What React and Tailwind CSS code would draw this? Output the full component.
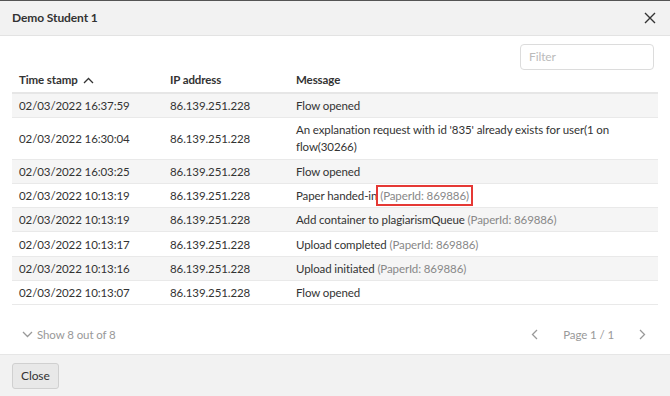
import React from "react";

const rows = [
  { t: "02/03/2022 16:37:59", ip: "86.139.251.228", m: "Flow opened" },
  { t: "02/03/2022 16:30:04", ip: "86.139.251.228", m: "An explanation request with id '835' already exists for user(1 on", m2: "flow(30266)" },
  { t: "02/03/2022 16:03:25", ip: "86.139.251.228", m: "Flow opened" },
  { t: "02/03/2022 10:13:19", ip: "86.139.251.228", m: "Paper handed-in", pid: true, box: true },
  { t: "02/03/2022 10:13:19", ip: "86.139.251.228", m: "Add container to plagiarismQueue", pid: true },
  { t: "02/03/2022 10:13:17", ip: "86.139.251.228", m: "Upload completed", pid: true },
  { t: "02/03/2022 10:13:16", ip: "86.139.251.228", m: "Upload initiated", pid: true },
  { t: "02/03/2022 10:13:07", ip: "86.139.251.228", m: "Flow opened" },
];

export default function App() {
  return (
    <div className="w-[670px] h-[396px] bg-white flex flex-col text-[#333] font-['Lato',sans-serif] text-[11.5px] tracking-[-0.1px] overflow-hidden border-t border-[#555]">
      <div className="h-[35px] bg-[#f2f2f2] border-b border-[#e3e3e3] flex items-center justify-between pl-3 pr-[14px] shrink-0">
        <div className="font-bold text-[12px] text-[#333]">Demo Student 1</div>
        <svg width="12" height="12" viewBox="0 0 12 12" className="text-[#333]">
          <path d="M1 1L11 11M11 1L1 11" stroke="currentColor" strokeWidth="1.4" />
        </svg>
      </div>
      <div className="flex-1 flex flex-col px-3">
        <div className="flex justify-end pt-[8px] pr-[4px]">
          <div className="w-[134px] h-[26px] border border-[#dcdcdc] rounded-[4px] flex items-center px-2 text-[12px] text-[#bbb]">Filter</div>
        </div>
        <div className="mt-[1px]">
          <div className="flex h-[23px] items-center pb-[3px] font-bold border-b-2 border-[#e6e6e6]">
            <div className="w-[158px] pl-[7px] flex items-center gap-[5px]">
              Time stamp
              <svg width="11" height="7" viewBox="0 0 11 7"><path d="M1 6L5.5 1.5L10 6" fill="none" stroke="#333" strokeWidth="1.3" /></svg>
            </div>
            <div className="w-[126px]">IP address</div>
            <div className="flex-1">Message</div>
          </div>
          {rows.map((r, i) => (
            <div key={i} className={`flex leading-[17px] py-[3.15px] border-b border-[#e9e9e9] ${i % 2 === 0 ? "bg-[#f5f5f5]" : "bg-white"}`}>
              <div className={`w-[158px] pl-[7px] ${r.m2 ? "self-center" : ""}`}>{r.t}</div>
              <div className={`w-[126px] ${r.m2 ? "self-center" : ""}`}>{r.ip}</div>
              <div className="flex-1">
                {r.m}
                {r.m2 && (<><br />{r.m2}</>)}
                {r.pid && (
                  r.box ? (
                    <span className="text-[#888]">
                      {" "}
                      <span className="outline-2 outline-[#e53935] outline-offset-2">(PaperId: 869886)</span>
                    </span>
                  ) : (
                    <span className="text-[#888]"> (PaperId: 869886)</span>
                  )
                )}
              </div>
            </div>
          ))}
        </div>
        <div className="flex items-center justify-between mt-[21px] pl-[10px] pr-[12px] text-[#999]">
          <div className="flex items-center gap-[4px]">
            <svg width="11" height="7" viewBox="0 0 11 7"><path d="M1 1L5.5 5.5L10 1" fill="none" stroke="#999" strokeWidth="1.3" /></svg>
            Show 8 out of 8
          </div>
          <div className="flex items-center">
            <svg width="7" height="11" viewBox="0 0 7 11"><path d="M6 1L1.5 5.5L6 10" fill="none" stroke="#999" strokeWidth="1.3" /></svg>
            <span className="ml-[25px] mr-[25px]">Page 1 / 1</span>
            <svg width="7" height="11" viewBox="0 0 7 11"><path d="M1 1L5.5 5.5L1 10" fill="none" stroke="#999" strokeWidth="1.3" /></svg>
          </div>
        </div>
      </div>
      <div className="h-[42px] bg-[#f2f2f2] border-t border-[#e6e6e6] flex items-center pl-3 shrink-0">
        <button className="h-[26px] px-[8px] bg-[#e8e8e8] border border-[#d0d0d0] rounded-[3px] text-[#333] text-[12px]">Close</button>
      </div>
    </div>
  );
}
